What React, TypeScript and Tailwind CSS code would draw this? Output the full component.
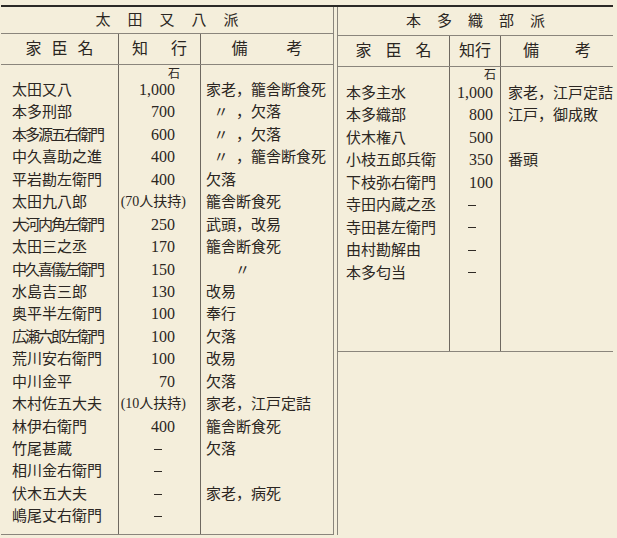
import React from "react";

type Row = { name: string; val: string; note?: React.ReactNode; tight?: boolean };

const ditto = (rest: string) => (
  <>
    <span className="inline-block w-[30px] text-center">〃</span>，{rest}
  </>
);

const leftRows: Row[] = [
  { name: "太田又八", val: "1,000", note: "家老，籠舎断食死" },
  { name: "本多刑部", val: "700", note: ditto("欠落") },
  { name: "本多源五右衛門", val: "600", note: ditto("欠落"), tight: true },
  { name: "中久喜助之進", val: "400", note: ditto("籠舎断食死") },
  { name: "平岩勘左衛門", val: "400", note: "欠落" },
  { name: "太田九八郎", val: "(70人扶持)", note: "籠舎断食死" },
  { name: "大河内角左衛門", val: "250", note: "武頭，改易", tight: true },
  { name: "太田三之丞", val: "170", note: "籠舎断食死" },
  { name: "中久喜儀左衛門", val: "150", note: <span className="ml-[29px]">〃</span>, tight: true },
  { name: "水島吉三郎", val: "130", note: "改易" },
  { name: "奥平半左衛門", val: "100", note: "奉行" },
  { name: "広瀬六郎左衛門", val: "100", note: "欠落", tight: true },
  { name: "荒川安右衛門", val: "100", note: "改易" },
  { name: "中川金平", val: "70", note: "欠落" },
  { name: "木村佐五大夫", val: "(10人扶持)", note: "家老，江戸定詰" },
  { name: "林伊右衛門", val: "400", note: "籠舎断食死" },
  { name: "竹尾甚蔵", val: "-", note: "欠落" },
  { name: "相川金右衛門", val: "-" },
  { name: "伏木五大夫", val: "-", note: "家老，病死" },
  { name: "嶋尾丈右衛門", val: "-" },
];

const rightRows: Row[] = [
  { name: "本多主水", val: "1,000", note: "家老，江戸定詰" },
  { name: "本多織部", val: "800", note: "江戸，御成敗" },
  { name: "伏木権八", val: "500" },
  { name: "小枝五郎兵衛", val: "350", note: "番頭" },
  { name: "下枝弥右衛門", val: "100" },
  { name: "寺田内蔵之丞", val: "-" },
  { name: "寺田甚左衛門", val: "-" },
  { name: "由村勘解由", val: "-" },
  { name: "本多匂当", val: "-" },
];

const rowCls = "h-[22.45px] leading-[22.45px] whitespace-nowrap";

// characters laid out with a fixed gap between them (letter-spaced headings)
function Spaced({ text, gap }: { text: string; gap: string }) {
  return (
    <div className={`flex whitespace-nowrap leading-none ${gap}`}>
      {text.split("").map((c, i) => (
        <span key={i}>{c}</span>
      ))}
    </div>
  );
}

function Value({ val, side }: { val: string; side: "left" | "right" }) {
  if (val === "-") {
    return (
      <div className={`${rowCls} flex items-center justify-end ${side === "left" ? "pr-[38px]" : "pr-[24px]"}`}>
        <span className="block w-[8px] h-px bg-[#2f2a25]" />
      </div>
    );
  }
  if (val.startsWith("(")) {
    return <div className={`${rowCls} text-right pr-[14px] text-[14px]`}>{val}</div>;
  }
  return (
    <div className={`${rowCls} text-right text-[16px] ${side === "left" ? "pr-[25px]" : "pr-[7px]"}`}>{val}</div>
  );
}

export default function App() {
  return (
    <div
      className="w-[617px] h-[538px] bg-[#f4eedb] text-[#2b2622] overflow-hidden pt-[5px]"
      style={{ fontFamily: '"Liberation Serif", "Noto Sans CJK JP", serif' }}
    >
      <div className="ml-[1px] w-[612px] border-t-2 border-[#2b2926] flex items-stretch text-[15px]">
        {/* 太田又八派 */}
        <div className="w-[333px] border-r border-[#8a857c] flex flex-col">
          <div className="h-[27px] border-b border-[#8a857c] flex items-center justify-center">
            <Spaced text="太田又八派" gap="gap-[17px]" />
          </div>
          <div className="h-[31px] border-b border-[#8a857c] grid grid-cols-[118px_82px_1fr] text-[16px]">
            <div className="border-r border-[#6e6860] flex items-center justify-center">
              <Spaced text="家臣名" gap="gap-[10px]" />
            </div>
            <div className="border-r border-[#6e6860] flex items-center justify-center">
              <Spaced text="知行" gap="gap-[23px]" />
            </div>
            <div className="flex items-center justify-center">
              <Spaced text="備考" gap="gap-[39px]" />
            </div>
          </div>
          <div className="h-[470px] border-b border-[#8a857c] grid grid-cols-[118px_82px_1fr]">
            <div className="border-r border-[#6e6860]">
              <div className="h-[14px]" />
              {leftRows.map((r) => (
                <div key={r.name} className={`${rowCls} pl-[11px] ${r.tight ? "tracking-[-2px]" : ""}`}>
                  {r.name}
                </div>
              ))}
            </div>
            <div className="border-r border-[#6e6860]">
              <div className="h-[14px] text-[12px] leading-[18px] text-right pr-[20px]">石</div>
              {leftRows.map((r) => (
                <Value key={r.name} val={r.val} side="left" />
              ))}
            </div>
            <div>
              <div className="h-[14px]" />
              {leftRows.map((r) => (
                <div key={r.name} className={`${rowCls} pl-[5px]`}>
                  {r.note}
                </div>
              ))}
            </div>
          </div>
        </div>

        {/* 本多織部派 */}
        <div className="ml-[3px] w-[276px] border-l border-[#8a857c] flex flex-col">
          <div className="h-[29px] border-b border-[#8a857c] flex items-center justify-center">
            <Spaced text="本多織部派" gap="gap-[16px]" />
          </div>
          <div className="h-[31px] border-b border-[#8a857c] grid grid-cols-[112px_51px_1fr] text-[16px]">
            <div className="border-r border-[#6e6860] flex items-center justify-center">
              <Spaced text="家臣名" gap="gap-[14px]" />
            </div>
            <div className="border-r border-[#6e6860] flex items-center justify-center">
              <Spaced text="知行" gap="gap-0" />
            </div>
            <div className="flex items-center justify-center">
              <Spaced text="備考" gap="gap-[36px]" />
            </div>
          </div>
          <div className="h-[285px] border-b border-[#8a857c] grid grid-cols-[112px_51px_1fr]">
            <div className="border-r border-[#6e6860]">
              <div className="h-[15px]" />
              {rightRows.map((r) => (
                <div key={r.name} className={`${rowCls} pl-[8px]`}>
                  {r.name}
                </div>
              ))}
            </div>
            <div className="border-r border-[#6e6860]">
              <div className="h-[15px] text-[12px] leading-[16px] text-right pr-[4px]">石</div>
              {rightRows.map((r) => (
                <Value key={r.name} val={r.val} side="right" />
              ))}
            </div>
            <div>
              <div className="h-[15px]" />
              {rightRows.map((r) => (
                <div key={r.name} className={`${rowCls} pl-[7px]`}>
                  {r.note}
                </div>
              ))}
            </div>
          </div>
        </div>
      </div>
    </div>
  );
}
